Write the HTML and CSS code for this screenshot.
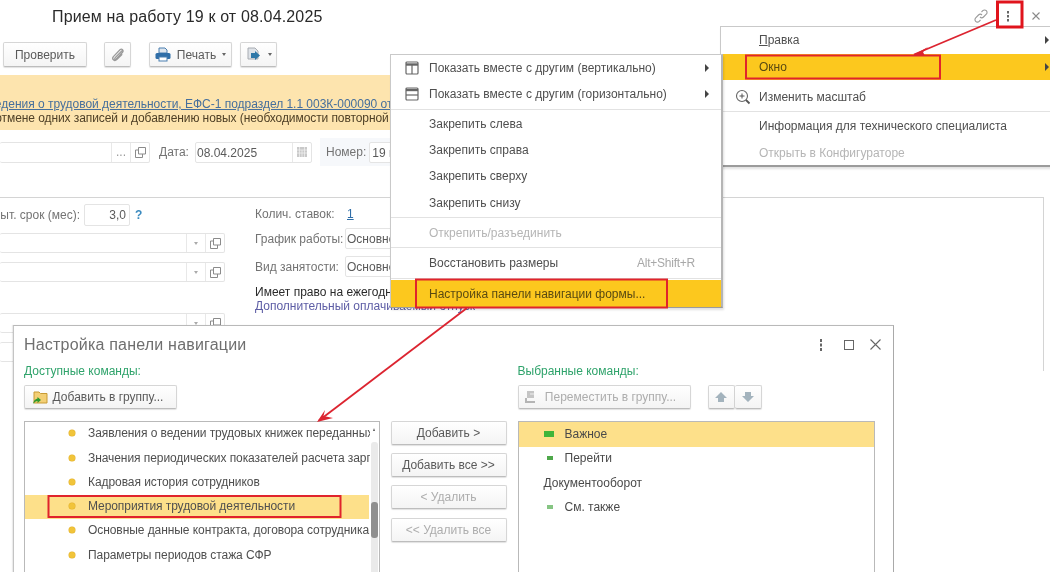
FILE: index.html
```html
<!DOCTYPE html>
<html lang="ru">
<head>
<meta charset="utf-8">
<title>Прием на работу 19 к от 08.04.2025</title>
<link rel="stylesheet" href="styles.css">
</head>
<body>
<div class="screen">

  <main class="form">
    <header class="title-row">
      <h1 class="title">Прием на работу 19 к от 08.04.2025</h1>
      <div class="win-ctrls">
        <svg width="14" height="14" viewBox="0 0 14 14"><path d="M6 8c1 1 2.500 1 3.500 0l2.800-2.800c1-1 1-2.500 0-3.500s-2.500-1-3.500 0L7.500 3M8 6C7 5 5.500 5 4.500 6L1.700 8.800c-1 1-1 2.500 0 3.500s2.500 1 3.500 0L6.500 11" fill="none" stroke="#9a9a9a" stroke-width="1.100"/></svg>
        <svg width="4" height="12" viewBox="0 0 4 12"><path d="M2 1v2.500M2 5v2.500M2 9v2.500" stroke="#666" stroke-width="2"/></svg>
        <svg class="win-x" width="8" height="8" viewBox="0 0 8 8"><path d="m.5.500 7 7M7.500.5l-7 7" stroke="#8a8a8a" stroke-width="1.100"/></svg>
      </div>
    </header>

    <div class="toolbar">
      <button class="btn btn-check">Проверить</button>
      <button class="btn btn-clip" aria-label="Файлы">
        <svg width="16" height="16" viewBox="0 0 16 16"><path d="M12.500 3.200 5.200 10.600c-1 1-.2 2.200.8 1.600l6.600-7c1.600-1.800-.8-4-2.600-2.400L3.400 9.600c-2 2.400 1 5.200 3.400 3l5.400-5.400" fill="none" stroke="#9a9a9a" stroke-width="1.300"/></svg>
      </button>
      <button class="btn btn-print">
        <svg width="16" height="15" viewBox="0 0 16 15"><path d="M4 1h6l2 2v3H4z" fill="#dfe6ee" stroke="#4a7fb0"/><rect x="0.500" y="6" width="15" height="6" rx="1.500" fill="#2f6ea8"/><rect x="4" y="10" width="8" height="4" fill="#fff" stroke="#4a7fb0"/></svg>
        <span>Печать</span><i class="caret"></i>
      </button>
      <button class="btn btn-doc" aria-label="Создать на основании">
        <svg width="16" height="16" viewBox="0 0 16 16"><path d="M2 1h7l3 3v8H2z" fill="#dfe3e8" stroke="#a8acb2"/><path d="M5 6h4V4l5 4.500-5 4.500v-2H5z" fill="#2f78a8"/></svg>
        <i class="caret"></i>
      </button>
    </div>

    <section class="banner">
      <a class="banner-link">Сведения о трудовой деятельности, ЕФС-1 подраздел 1.1 003К-000090 от</a>
      <p class="banner-text">по отмене одних записей и добавлению новых (необходимости повторной</p>
    </section>

    <div class="date-row">
      <div class="field field-org">
        <span class="field-grow"></span>
        <span class="field-cell">...</span>
        <span class="field-cell"><svg class="ico-open" viewBox="0 0 11 11"><path d="M3.500 .5h7v6.500h-7zM3.500 3H.5v7.500h7V7" fill="none" stroke="#8b8b8b"/></svg></span>
      </div>
      <label class="lbl lbl-date">Дата:</label>
      <div class="field field-date">
        <span class="field-grow field-val">08.04.2025</span>
        <span class="field-cell"><svg width="12" height="12" viewBox="0 0 12 12"><rect x="1" y="1" width="10" height="10" fill="#c9c9c9"/><path d="M1 4h10M3.500 1v10M6 4v7M8.500 1v10M1 7h10" stroke="#f2f2f2" stroke-width=".7"/></svg></span>
      </div>
      <div class="num-box">
        <label class="lbl">Номер:</label>
        <div class="field field-num"><span class="field-val">19 к</span></div>
      </div>
    </div>

    <section class="group">
      <div class="col-left">
        <div class="trial-row">
          <div class="trial-label"><span>Испыт. срок (мес):</span></div>
          <div class="field field-trial"><span class="field-val">3,0</span></div>
          <span class="help">?</span>
        </div>
        <div class="field field-wide">
          <span class="field-grow"></span>
          <span class="field-cell"><i class="caret caret-light"></i></span>
          <span class="field-cell"><svg class="ico-open" viewBox="0 0 11 11"><path d="M3.500 .5h7v6.500h-7zM3.500 3H.5v7.500h7V7" fill="none" stroke="#8b8b8b"/></svg></span>
        </div>
        <div class="field field-wide">
          <span class="field-grow"></span>
          <span class="field-cell"><i class="caret caret-light"></i></span>
          <span class="field-cell"><svg class="ico-open" viewBox="0 0 11 11"><path d="M3.500 .5h7v6.500h-7zM3.500 3H.5v7.500h7V7" fill="none" stroke="#8b8b8b"/></svg></span>
        </div>
        <div class="field field-wide field-third">
          <span class="field-grow"></span>
          <span class="field-cell"><i class="caret caret-light"></i></span>
          <span class="field-cell"><svg class="ico-open" viewBox="0 0 11 11"><path d="M3.500 .5h7v6.500h-7zM3.500 3H.5v7.500h7V7" fill="none" stroke="#8b8b8b"/></svg></span>
        </div>
        <div class="field field-wide"></div>
      </div>
      <div class="col-right">
        <div class="pair pair-rate"><span class="lbl lbl-fixed">Колич. ставок:</span><a class="rate-link">1</a></div>
        <div class="pair"><span class="lbl lbl-fixed">График работы:</span><div class="field field-sched"><span class="field-val">Основной</span></div></div>
        <div class="pair"><span class="lbl lbl-fixed">Вид занятости:</span><div class="field field-sched"><span class="field-val">Основное</span></div></div>
        <p class="vac">Имеет право на ежегодный отпуск</p>
        <a class="vac-link">Дополнительный оплачиваемый отпуск</a>
      </div>
    </section>
  </main>

  <aside class="menu menu-top">
    <div class="mi"><span class="mi-text"><u>П</u>равка</span><i class="arrow"></i></div>
    <div class="mi mi-hot"><span class="mi-text">Окно</span><i class="arrow"></i></div>
    <div class="mi mi-zoom">
      <svg class="mi-ico" width="16" height="16" viewBox="0 0 16 16"><circle cx="7" cy="7" r="5.500" fill="none" stroke="#666" stroke-width="1.100"/><path d="M4.500 7h5M7 4.500v5" stroke="#555"/><path d="m11 11 3.500 3.500" stroke="#555" stroke-width="1.800"/></svg>
      <span class="mi-text">Изменить масштаб</span>
    </div>
    <hr class="sep">
    <div class="mi"><span class="mi-text">Информация для технического специалиста</span></div>
    <div class="mi mi-off"><span class="mi-text">Открыть в Конфигураторе</span></div>
  </aside>

  <aside class="menu menu-window">
    <div class="mi">
      <svg class="mi-ico" width="14" height="14" viewBox="0 0 14 14"><rect x="1" y="1" width="12" height="12" rx="1" fill="none" stroke="#666" stroke-width="1.200"/><path d="M1 3.500h12" stroke="#666" stroke-width="2.400"/><path d="M7 3v10" stroke="#666" stroke-width="1.200"/></svg>
      <span class="mi-text">Показать вместе с другим (вертикально)</span><i class="arrow"></i>
    </div>
    <div class="mi">
      <svg class="mi-ico" width="14" height="14" viewBox="0 0 14 14"><rect x="1" y="1" width="12" height="12" rx="1" fill="none" stroke="#666" stroke-width="1.200"/><path d="M1 3h12" stroke="#666" stroke-width="2.400"/><path d="M1 8h12" stroke="#666" stroke-width="1.200"/></svg>
      <span class="mi-text">Показать вместе с другим (горизонтально)</span><i class="arrow"></i>
    </div>
    <hr class="sep">
    <div class="mi"><span class="mi-text">Закрепить слева</span></div>
    <div class="mi"><span class="mi-text">Закрепить справа</span></div>
    <div class="mi"><span class="mi-text">Закрепить сверху</span></div>
    <div class="mi"><span class="mi-text">Закрепить снизу</span></div>
    <hr class="sep sep-wide">
    <div class="mi mi-off"><span class="mi-text">Открепить/разъединить</span></div>
    <hr class="sep sep-wide">
    <div class="mi"><span class="mi-text">Восстановить размеры</span><span class="shortcut">Alt+Shift+R</span></div>
    <hr class="sep sep-last">
    <div class="mi mi-hot"><span class="mi-text">Настройка панели навигации формы...</span></div>
  </aside>

  <section class="dialog">
    <header class="dlg-head">
      <h2 class="dlg-title">Настройка панели навигации</h2>
      <div class="dlg-ctrls">
        <svg width="4" height="12" viewBox="0 0 4 12"><path d="M2 0v3M2 4.500v3M2 9v3" stroke="#666" stroke-width="2"/></svg>
        <svg width="10" height="10" viewBox="0 0 10 10"><rect x=".5" y=".5" width="9" height="9" fill="none" stroke="#666"/></svg>
        <svg class="dlg-x" width="11" height="11" viewBox="0 0 11 11"><path d="m.5.500 10 10M10.500.5l-10 10" stroke="#666" stroke-width="1.100"/></svg>
      </div>
    </header>

    <div class="dlg-body">
      <div class="pane pane-left">
        <div class="cap">Доступные команды:</div>
        <div class="pane-tools">
          <button class="btn btn-addgroup">
            <svg width="16" height="16" viewBox="0 0 16 16"><path d="M2 3h5l1.500 1.500H15V14H2z" fill="#f3cf75" stroke="#c79a35"/><path d="M1 15c.5-3 2-5 4.500-5.500V8L9 11l-3.500 3v-2C4 12 2.500 13 1 15z" fill="#2f9a2c"/></svg>
            <span>Добавить в группу...</span>
          </button>
        </div>
        <div class="list list-left">
          <div class="li"><i class="dot"></i><span class="li-clip">Заявления о ведении трудовых книжек переданных</span></div>
          <div class="li"><i class="dot"></i><span class="li-clip">Значения периодических показателей расчета зарплаты</span></div>
          <div class="li"><i class="dot"></i><span class="li-clip">Кадровая история сотрудников</span></div>
          <div class="li li-sel"><i class="dot"></i><span class="li-clip">Мероприятия трудовой деятельности</span></div>
          <div class="li"><i class="dot"></i><span class="li-clip">Основные данные контракта, договора сотрудника</span></div>
          <div class="li"><i class="dot"></i><span class="li-clip">Параметры периодов стажа СФР</span></div>
          <div class="scroll"><i class="scroll-up"></i><i class="thumb"></i></div>
        </div>
      </div>

      <div class="mid">
        <button class="btn btn-mid">Добавить &gt;</button>
        <button class="btn btn-mid">Добавить все &gt;&gt;</button>
        <button class="btn btn-mid btn-off">&lt; Удалить</button>
        <button class="btn btn-mid btn-off">&lt;&lt; Удалить все</button>
      </div>

      <div class="pane pane-right">
        <div class="cap">Выбранные команды:</div>
        <div class="pane-tools">
          <button class="btn btn-move btn-off">
            <svg width="16" height="16" viewBox="0 0 16 16"><path d="M4 2h7v7H4z" fill="#c5c5c5"/><path d="M3 9v4h9" fill="none" stroke="#b5b5b5" stroke-width="2"/><path d="M7 5h4" stroke="#eee"/></svg>
            <span>Переместить в группу...</span>
          </button>
          <div class="updown">
            <button class="btn ud" aria-label="Вверх"><svg width="14" height="12" viewBox="0 0 14 12"><path d="M7 1 13 7H10v4H4V7H1z" fill="#a3b3bd"/></svg></button>
            <button class="btn ud ud-next" aria-label="Вниз"><svg width="14" height="12" viewBox="0 0 14 12"><path d="M7 11 1 5h3V1h6v4h3z" fill="#a3b3bd"/></svg></button>
          </div>
        </div>
        <div class="list list-right">
          <div class="ri ri-sel"><i class="tag tag-big"></i><span>Важное</span></div>
          <div class="ri"><i class="tag"></i><span>Перейти</span></div>
          <div class="ri ri-plain"><span>Документооборот</span></div>
          <div class="ri"><i class="tag tag-pale"></i><span>См. также</span></div>
        </div>
      </div>
    </div>
  </section>

  <svg class="marks" width="1050" height="572" viewBox="0 0 1050 572" aria-hidden="true">
    <g fill="none" stroke="#e0242c" stroke-width="2">
      <rect x="746" y="55.500" width="194" height="23"/>
      <rect x="416" y="279.500" width="251" height="28"/>
      <rect x="48.500" y="496" width="292" height="21"/>
    </g>
    <rect x="997.500" y="2" width="24.500" height="25" fill="none" stroke="#e0141c" stroke-width="3"/>
    <g fill="none" stroke="#dc2430" stroke-width="1.800">
      <path d="M996 20 914 54.500"/>
      <path d="M467 308 319 420.500"/>
    </g>
    <g fill="#dc2430">
      <path d="M911.500 56 928 47l-5 5 2 4z"/>
      <path d="M317 422 325 410l-1.500 6 9.500 2z"/>
    </g>
  </svg>
</div>
</body>
</html>
```

FILE: styles.css
```css
* { box-sizing: border-box; }
html, body { margin: 0; padding: 0; background: #fff; }
.screen {
  position: relative;
  width: 1050px;
  height: 572px;
  overflow: hidden;
  background: #fff;
  font: 12px/14px "Liberation Sans", Arial, sans-serif;
  color: #4a4a4a;
  filter: blur(.3px);
}
button { font: inherit; color: inherit; }
h1, h2, p { margin: 0; font-weight: 400; }

/* base form */
.form { display: flex; flex-direction: column; height: 572px; }
.title-row { display: flex; justify-content: space-between; height: 42px; padding: 7px 10px 0 52px; }
.title { font-size: 16px; line-height: 19px; color: #2a2a2a; letter-spacing: .15px; }
.win-ctrls { display: flex; align-items: center; gap: 18px; height: 18px; }
.win-x { margin-left: 4px; }
.toolbar { display: flex; align-items: stretch; height: 25px; padding-left: 3px; }
.btn {
  display: flex; align-items: center; justify-content: center; gap: 6px;
  padding: 0; height: 100%;
  border: 1px solid #d6d6d6; border-bottom-color: #bdbdbd; border-radius: 2px;
  background: linear-gradient(#fff, #f4f4f4);
  box-shadow: 0 1px 1px rgba(0,0,0,.12);
  color: #5a5a5a;
  white-space: nowrap;
}
.btn-check { width: 84px; }
.btn-clip { width: 27px; margin-left: 17px; }
.btn-print { width: 83px; margin-left: 18px; }
.btn-doc { width: 37px; margin-left: 8px; }
.caret { display: inline-block; width: 0; height: 0; border: 2.5px solid transparent; border-top: 3px solid #666; border-bottom: 0; }
.caret-light { border-top-color: #aaa; }

.banner {
  height: 55px; margin-top: 8px; padding-top: 22px;
  background: #fde4ae; width: 720px; font-size: 12px; line-height: 14px; white-space: nowrap;
}
.banner-link { display: block; margin-left: -20px; color: #466f9c; text-decoration: underline; letter-spacing: -.02px; }
.banner-text { margin-left: -21px; color: #4f4026; letter-spacing: -.08px; }

.date-row { display: flex; align-items: center; height: 28px; margin-top: 8px; }
.field {
  display: flex; align-items: stretch; height: 100%;
  border: 1px solid #e4e4e4; border-radius: 2px; background: #fff;
}
.field-grow { flex: 1; }
.field-val { padding: 2px 3px 2px 1px; line-height: 16px; color: #5a5a5a; }
.field-cell { display: flex; align-items: center; justify-content: center; width: 19px; border-left: 1px solid #e8e8e8; color: #999; }
.ico-open { width: 11px; height: 11px; }
.field-org { width: 150px; height: 21px; border-left: 0; }
.lbl { color: #737373; white-space: nowrap; }
.lbl-date { margin-left: 9px; width: 36px; }
.field-date { width: 117px; height: 21px; }
.num-box { display: flex; align-items: center; gap: 3px; height: 28px; margin-left: 8px; padding-left: 6px; background: #f6f8fb; flex: 0 0 300px; }
.field-num { width: 120px; height: 21px; }
.field-num .field-val { padding-left: 2px; }

.group {
  display: flex; width: 1044px; height: 174px; margin-top: 31px;
  border-top: 1px solid #d4d4d4; border-right: 1px solid #d4d4d4;
}
.col-left { width: 255px; padding-top: 6px; }
.trial-row { display: flex; align-items: center; height: 22px; }
.trial-label { display: flex; justify-content: flex-end; width: 80px; overflow: hidden; white-space: nowrap; color: #737373; }
.trial-label span { flex: none; }
.field-trial { width: 46px; height: 22px; margin-left: 4px; justify-content: flex-end; }
.help { margin-left: 5px; font-weight: 700; color: #3a8abf; }
.field-wide { width: 225px; height: 20px; margin-top: 7px; border-left: 0; }
.field-wide + .field-wide { margin-top: 9px; }
.field-wide.field-third { margin-top: 31px; }
.col-right { flex: 1; padding-top: 8px; white-space: nowrap; }
.pair { display: flex; align-items: center; height: 21px; margin-bottom: 7px; }
.pair-rate { height: 15px; margin-bottom: 7px; }
.lbl-fixed { width: 90px; }
.rate-link { color: #2f6ea8; text-decoration: underline; margin-left: 2px; }
.field-sched { width: 100px; }
.vac { color: #2a2a2a; margin-top: 8px; }
.vac-link { display: block; color: #5d5da5; }

/* popup menus */
.menu {
  position: absolute; background: #fff;
  border: 1px solid #c9c9c9; border-bottom: 2px solid #9b9b9b; border-right: 2px solid #b5b5b5;
  box-shadow: 1px 2px 2px rgba(0,0,0,.12);
  color: #4f4f4f;
}
.menu-top { left: 720px; top: 26px; width: 332px; height: 141px; }
.menu-window { left: 390px; top: 54px; width: 333px; height: 254px; }
.mi { position: relative; display: flex; align-items: center; height: 26.300px; padding-left: 38px; }
.menu-top .mi { height: 26.600px; }
.menu-top .mi.mi-zoom { height: 26px; margin-top: 4px; }
.mi-ico { position: absolute; left: 14px; top: 50%; transform: translateY(-50%); }
.mi-text { white-space: nowrap; }
.mi-hot { background: #fcc81e; color: #5a4a12; }
.mi-off { color: #b5b5b5; }
.arrow {
  position: absolute; right: 12px; top: 50%; margin-top: -4px;
  border-left: 4px solid #444; border-top: 4px solid transparent; border-bottom: 4px solid transparent;
}
.menu-top .arrow { right: 1px; }
.shortcut { position: absolute; right: 26px; color: #a8a8a8; letter-spacing: -.25px; }
.sep { height: 1px; margin: 1px 0 1px; border: 0; background: #e2e2e2; }
.sep-wide { margin-bottom: 2px; }
.sep-last { margin: 2px 0 1px; }

/* dialog */
.dialog {
  position: absolute; left: 13px; top: 325px; width: 881px; height: 260px; padding: 0 18px 0 10px;
  background: #fff; border: 1px solid #c4c4c4; border-right-color: #a9a9a9; border-top-color: #b9b9b9;
  box-shadow: -1px 0 1px rgba(0,0,0,.08);
}
.dlg-head { display: flex; justify-content: space-between; align-items: center; height: 37px; }
.dlg-title { font-size: 16px; line-height: 20px; color: #6f6f6f; letter-spacing: .2px; }
.dlg-ctrls { display: flex; align-items: center; gap: 21px; margin-right: -6px; }
.dlg-x { margin-left: -5px; }
.dlg-body { display: flex; }
.pane-left { width: 356px; }
.pane-right { width: 358px; margin-left: 11px; }
.cap { height: 16px; line-height: 16px; color: #2fa36b; }
.pane-tools { display: flex; height: 24px; margin-top: 6px; }
.btn-addgroup { width: 153px; gap: 5px; padding-right: 6px; }
.btn-move { width: 173px; padding-right: 9px; }
.btn-off { color: #adadad; }
.updown { display: flex; margin-left: 17px; }
.ud { width: 27px; gap: 0; }
.ud-next { border-left: 0; }
.list { position: relative; height: 160px; margin-top: 12px; border: 1px solid #b9b9b9; overflow: hidden; }
.li { display: flex; align-items: center; height: 24.400px; padding: 0 0 2px 44px; color: #4f4f4f; letter-spacing: -.07px; }
.li-clip { width: 282px; overflow: hidden; white-space: nowrap; margin-left: 13px; flex: none; }
.li:first-child .li-clip { width: 282px; }
.dot { flex: none; width: 6px; height: 6px; border-radius: 50%; background: #f1c43a; box-shadow: 0 0 0 .5px #e2b02a; }
.li-sel { background: #fde08a; width: 344px; height: 24px; }
.scroll { position: absolute; right: 1px; top: 20px; bottom: 0; width: 7px; background: #eaeaea; border-radius: 3px 3px 0 0; }
.scroll-up { position: absolute; left: 2px; top: -15px; border: 1.500px solid transparent; border-bottom: 3px solid #555; }
.thumb { position: absolute; left: 0; top: 60px; width: 7px; height: 36px; background: #8f8f8f; border-radius: 3px; }
.mid { display: flex; flex-direction: column; gap: 8.200px; width: 116px; margin: 58px 0 0 11px; height: 120px; }
.btn-mid { width: 116px; height: 24px; flex: none; }
.ri { display: flex; align-items: center; height: 24.400px; padding: 0 0 2px 25px; gap: 11px; color: #4a4a4a; }
.ri-sel { background: #fde08a; height: 25px; }
.tag { width: 6px; height: 4px; margin-left: 3px; margin-right: 1px; background: #4fa84a; }
.tag-big { width: 10px; height: 6px; margin-left: 0; margin-right: 0; background: #3fb53a; }
.tag-pale { background: #86c583; }

.marks { position: absolute; left: 0; top: 0; pointer-events: none; }
```
